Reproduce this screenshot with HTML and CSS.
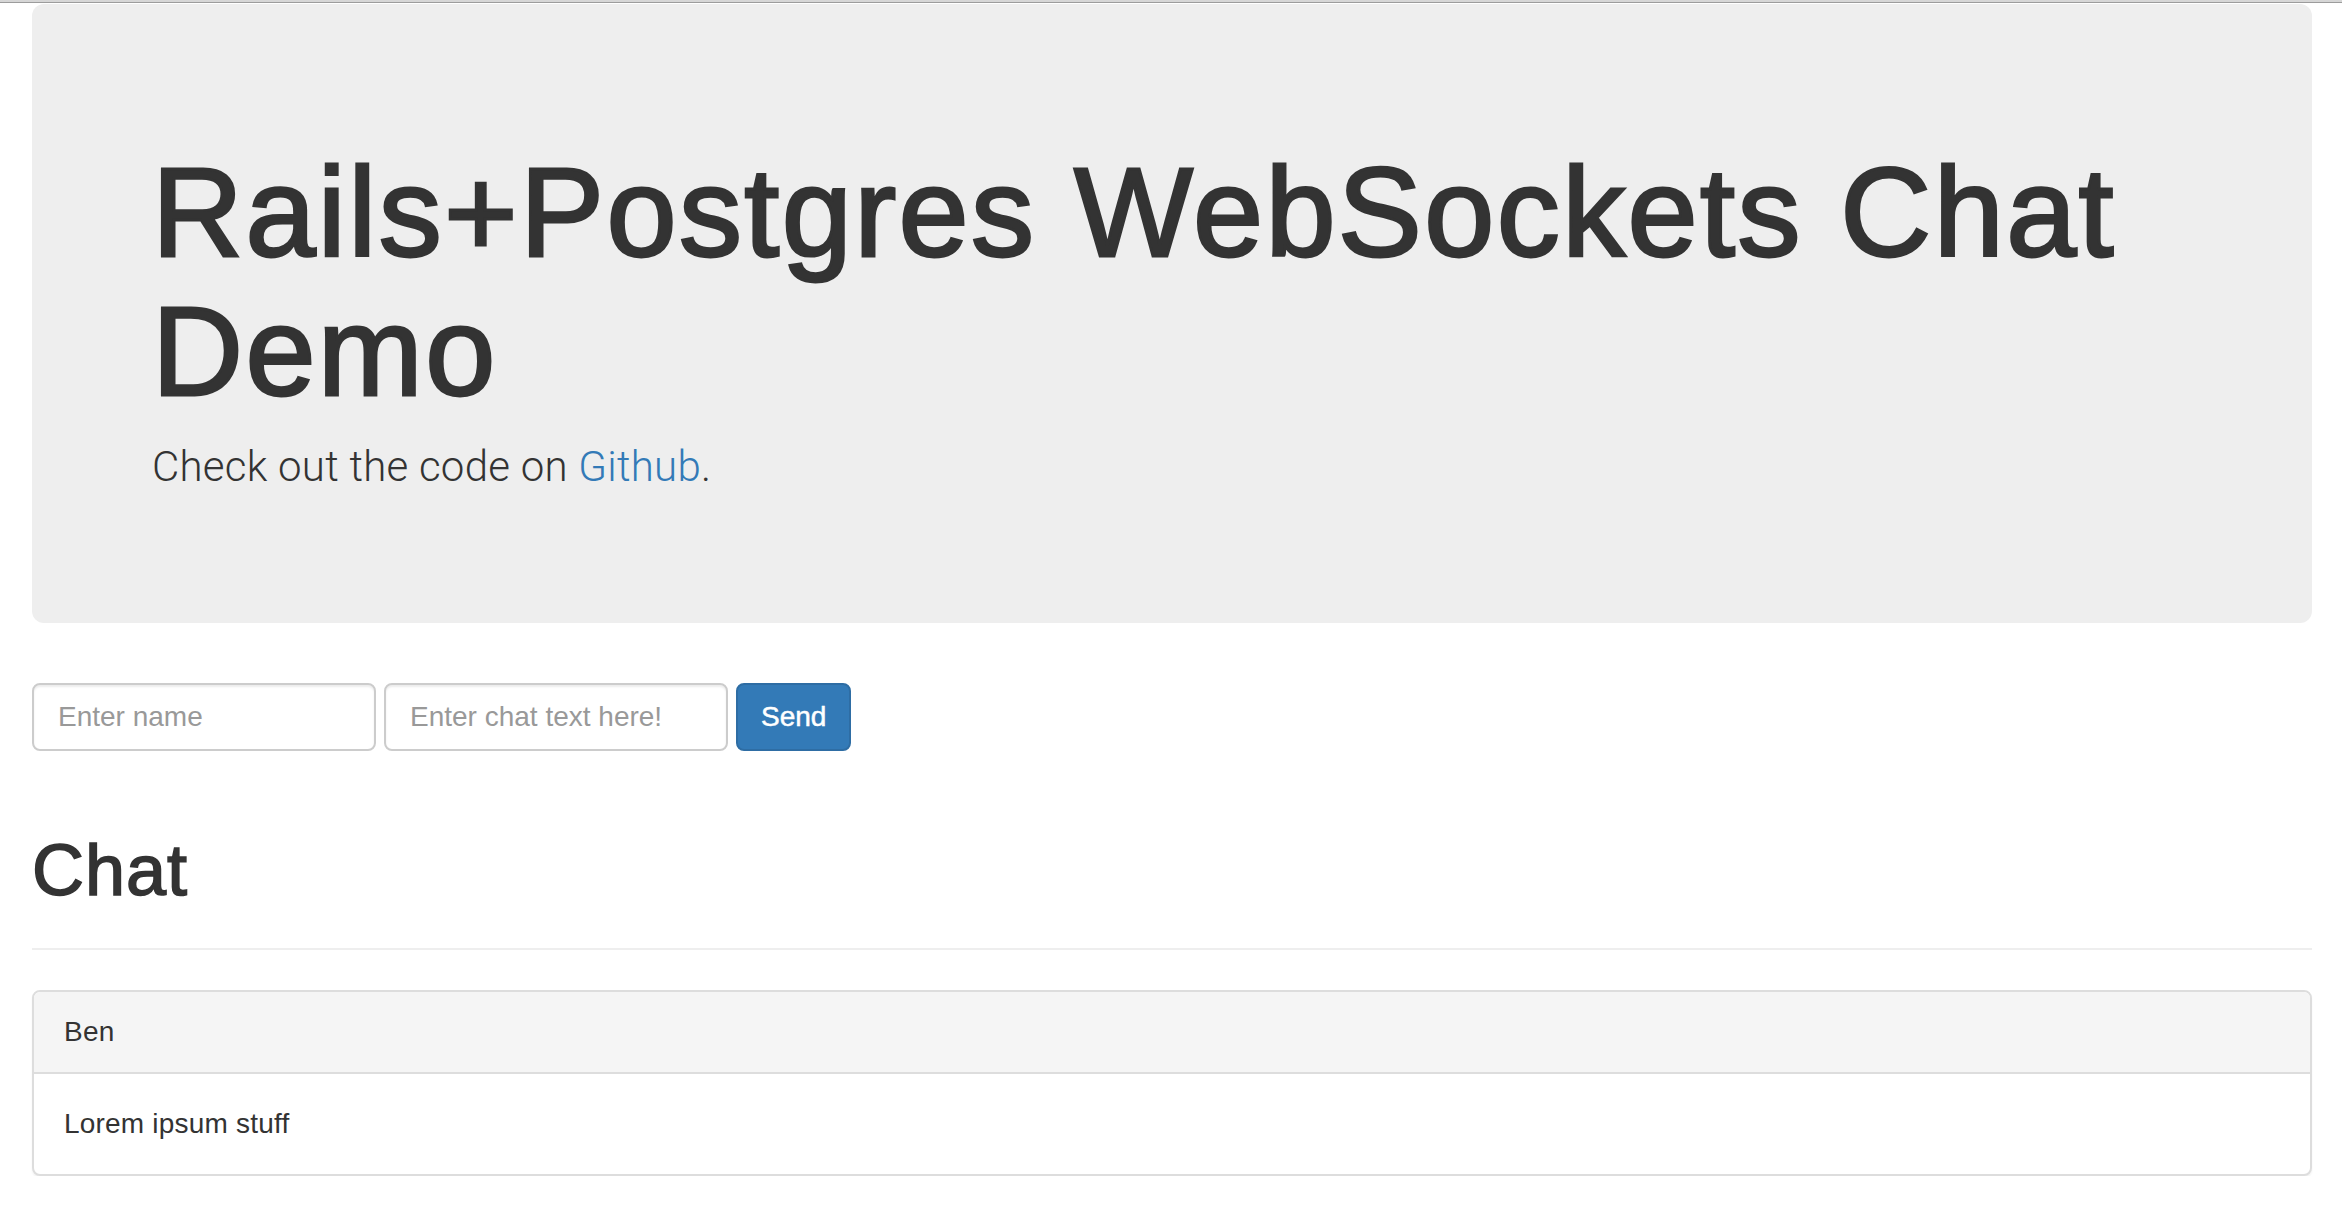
FILE: index.html
```html
<!DOCTYPE html>
<html lang="en">
<head>
<meta charset="utf-8">
<title>Rails+Postgres WebSockets Chat Demo</title>
<link rel="stylesheet" href="styles.css">
</head>
<body>
<div class="topbar"></div>
<div class="container">
  <div class="jumbotron">
    <h1 class="jumbo-title">Rails+Postgres WebSockets Chat Demo</h1>
    <p class="lead">Check out the code on <a href="#">Github</a>.</p>
  </div>
  <form class="chat-form">
    <input class="form-control" type="text" placeholder="Enter name">
    <input class="form-control" type="text" placeholder="Enter chat text here!">
    <button class="btn-send" type="button">Send</button>
  </form>
  <div class="page-header">
    <h1 class="section-title">Chat</h1>
  </div>
  <div class="panel">
    <div class="panel-heading">Ben</div>
    <div class="panel-body">Lorem ipsum stuff</div>
  </div>
</div>
</body>
</html>
```
FILE: styles.css
```css
* { box-sizing: border-box; }
html, body {
  margin: 0;
  padding: 0;
  background: #fff;
}
body {
  font-family: "Liberation Sans", Arial, Helvetica, sans-serif;
  color: #333;
  font-size: 28px;
  line-height: 40px;
  letter-spacing: 0.2px;
}
.topbar {
  height: 3px;
  background: #d6d6d6;
  border-bottom: 1px solid #9c9c9c;
  margin-bottom: 1px;
}
.container {
  padding: 0 30px 0 32px;
}
.jumbotron {
  background: #eeeeee;
  border-radius: 12px;
  padding: 96px 120px;
  margin-bottom: 60px;
}
.jumbo-title {
  margin: 44px 0 16px;
  font-size: 126px;
  line-height: 1.1;
  font-weight: 400;
  color: #333;
  letter-spacing: 2.4px;
  -webkit-text-stroke: 2.8px #333;
}
.lead {
  margin: 0 0 30px;
  font-family: "Roboto", "Liberation Sans", sans-serif;
  font-weight: 300;
  font-size: 42px;
  line-height: 60px;
  color: #333;
  letter-spacing: 0.25px;
}
.lead a {
  color: #337ab7;
  text-decoration: none;
}
.chat-form {
  display: flex;
  gap: 8px;
  margin: 0;
}
.form-control {
  width: 344px;
  height: 68px;
  padding: 12px 24px;
  font-family: "Liberation Sans", Arial, sans-serif;
  font-size: 28px;
  color: #555;
  background: #fff;
  border: 2px solid #ccc;
  border-radius: 8px;
  box-shadow: inset 0 2px 2px rgba(0,0,0,0.075);
  outline: none;
}
.form-control::placeholder {
  color: #999;
}
.btn-send {
  height: 68px;
  padding: 0 23px;
  font-family: "Liberation Sans", Arial, sans-serif;
  font-size: 28px;
  color: #fff;
  background: #337ab7;
  border: 2px solid #2e6da4;
  border-radius: 8px;
  cursor: pointer;
  -webkit-text-stroke: 0.5px #fff;
}
.page-header {
  margin: 80px 0 40px;
  padding-bottom: 18px;
  border-bottom: 2px solid #eee;
}
.section-title {
  margin: 0 0 20px;
  font-size: 72px;
  line-height: 1.1;
  font-weight: 400;
  color: #333;
  letter-spacing: 1px;
  -webkit-text-stroke: 1.6px #333;
}
.panel {
  border: 2px solid #ddd;
  border-radius: 8px;
  background: #fff;
  box-shadow: 0 2px 2px rgba(0,0,0,0.05);
  overflow: hidden;
}
.panel-heading {
  background: #f5f5f5;
  border-bottom: 2px solid #ddd;
  padding: 20px 30px;
  color: #333;
}
.panel-body {
  padding: 30px;
}
```
